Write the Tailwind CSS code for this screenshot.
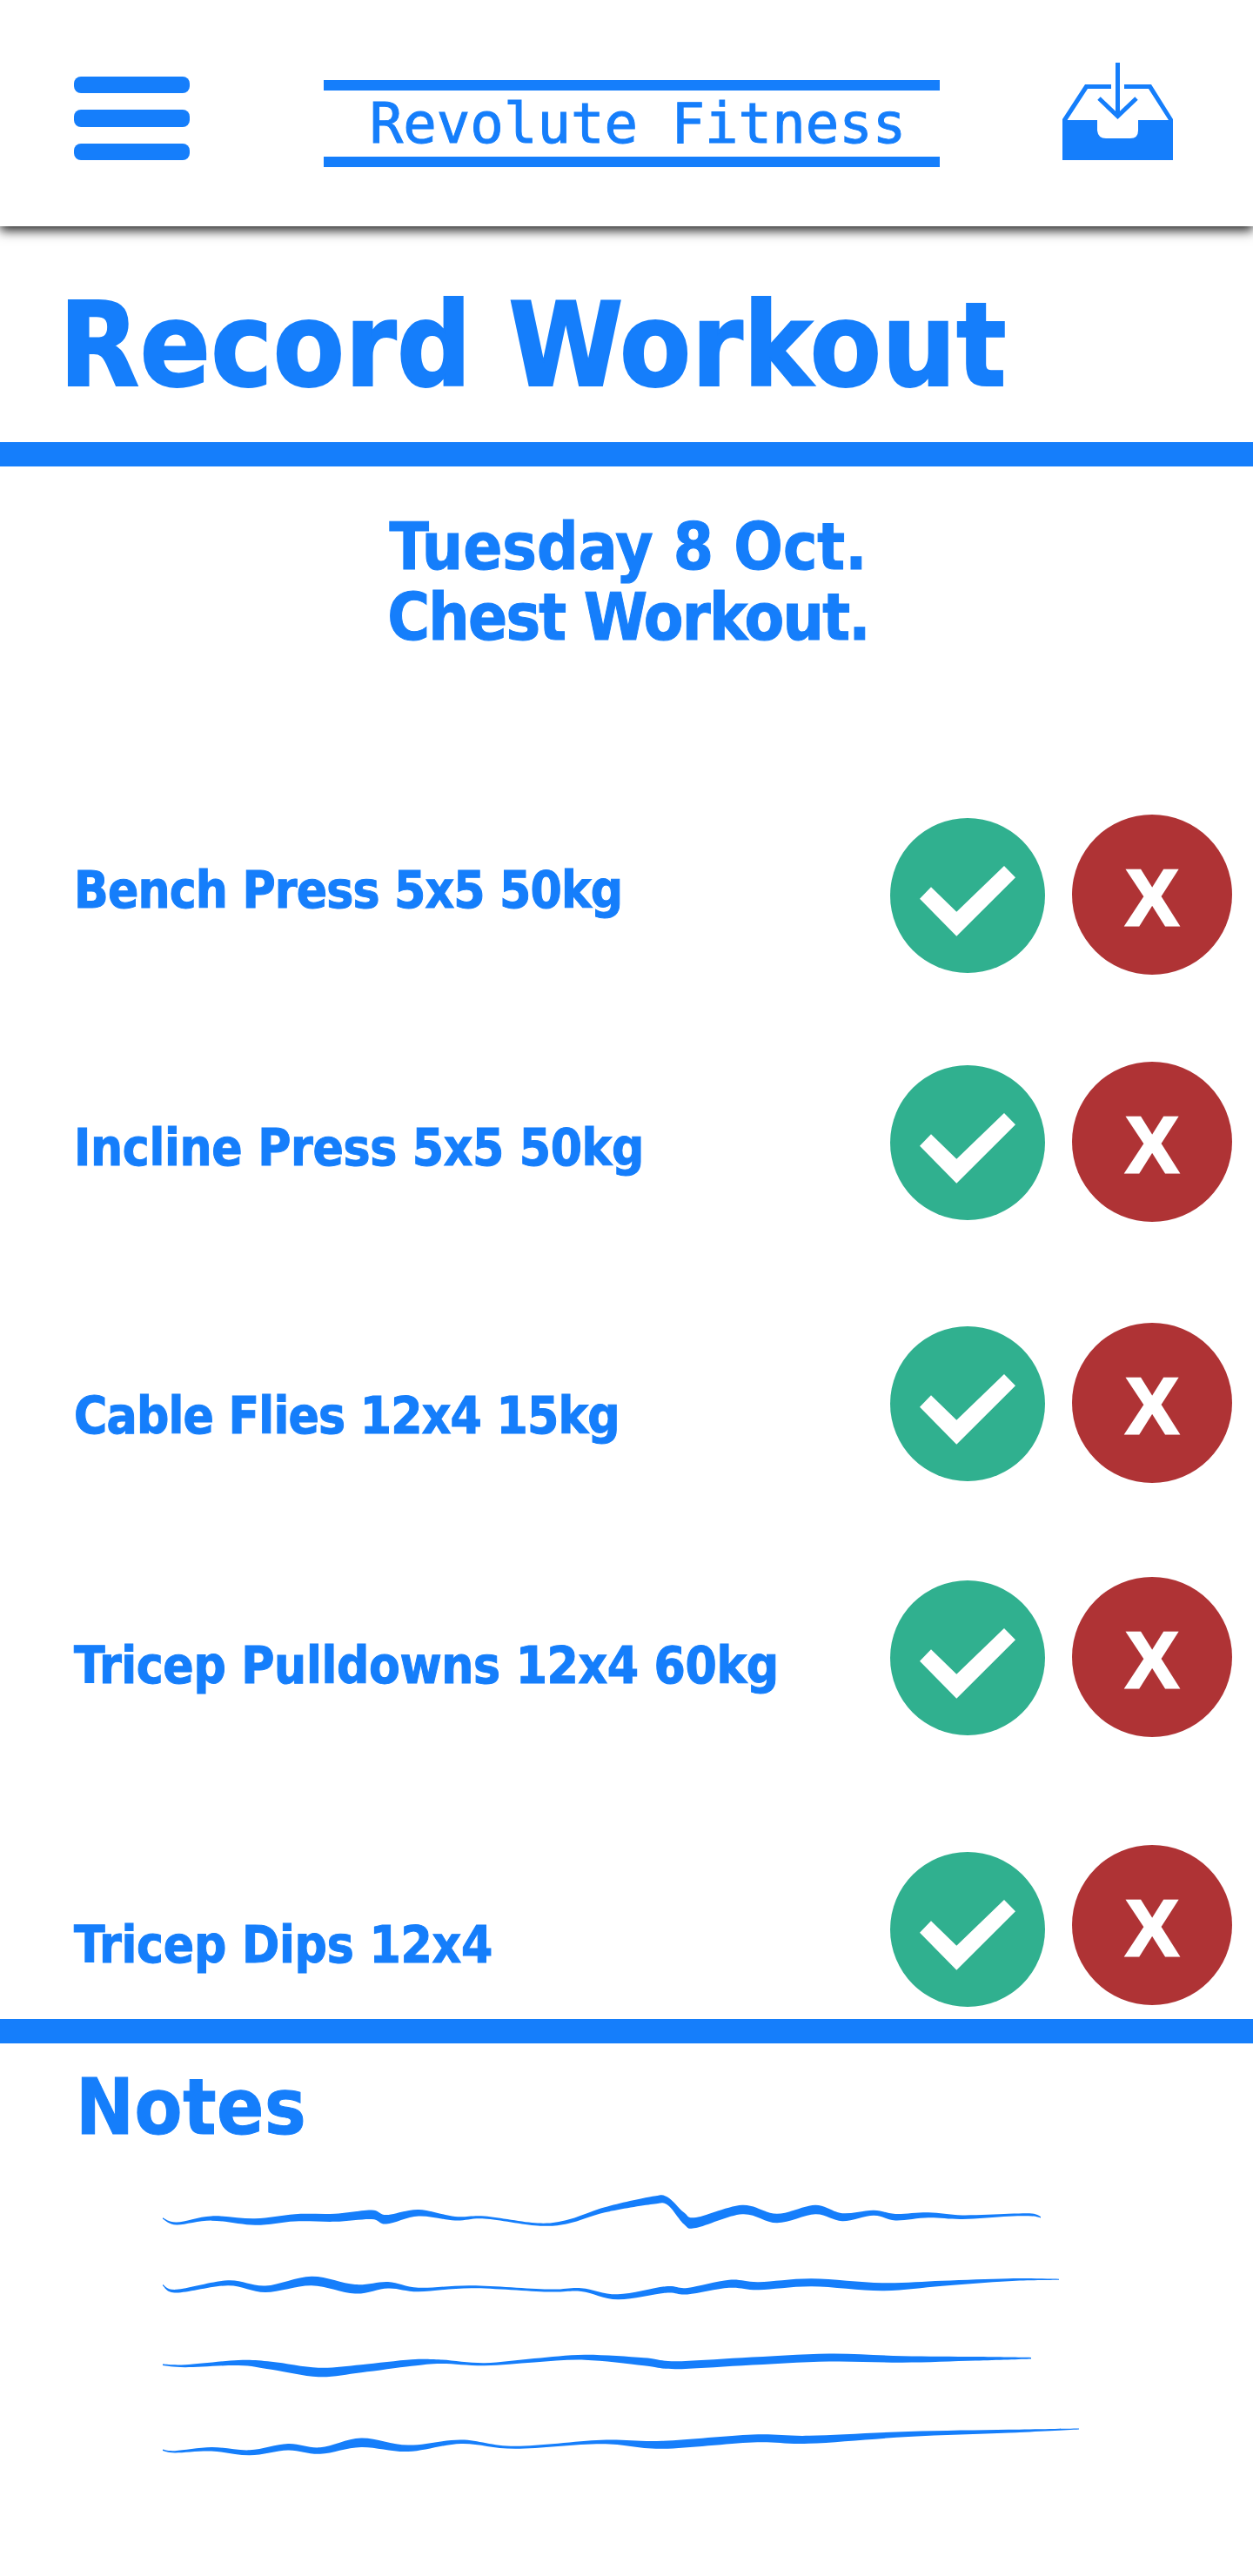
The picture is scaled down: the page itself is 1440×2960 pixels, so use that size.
<!DOCTYPE html>
<html lang="en">
<head>
  <meta charset="UTF-8">
  <title>Revolute Fitness - Record Workout</title>
  <script src="https://cdn.jsdelivr.net/npm/@tailwindcss/browser@4"></script>
</head>
<body class="bg-white text-[#157efb] font-['DejaVu_Sans_Condensed','DejaVu_Sans',sans-serif] font-bold">
  <div class="w-[1440px] h-[2960px] overflow-hidden flex flex-col">
    <!-- header -->
    <header class="h-[260px] shrink-0 flex items-start shadow-[0_5px_12px_rgba(0,0,0,0.85)] relative">
      <div class="ml-[85px] mt-[88px] w-[133px] flex flex-col gap-[19px]">
        <div class="h-[19px] rounded-[8px] bg-[#157efb]"></div>
        <div class="h-[20px] rounded-[8px] bg-[#157efb]"></div>
        <div class="h-[19px] rounded-[8px] bg-[#157efb]"></div>
      </div>
      <div class="ml-[154px] mt-[92px] w-[708px] h-[100px] border-y-[12px] border-[#157efb] flex items-center justify-center pl-[14px] font-['DejaVu_Sans_Mono',monospace] font-normal text-[64px] leading-none [-webkit-text-stroke:1px_#157efb]">Revolute Fitness</div>
      <svg class="ml-[141px] mt-[72px]" width="127" height="112" viewBox="0 0 127 112">
        <path fill="#157efb" d="M0 65 L26 25 H56 V30 H29 L5.500 66 H40 V78 Q41 87 50 87 H78 Q87 87 87 78 V66 H122 L99 30 H71 V25 H102 L127 65 V112 H0 Z"/>
        <path fill="none" stroke="#157efb" stroke-width="5" d="M63.500 0 V61 M42 41 L63.500 61.500 L85 41"/>
      </svg>
    </header>

    <h1 class="shrink-0 pl-[68px] pt-[71px] pb-[44px] text-[133px] leading-none tracking-[0.5px] [-webkit-text-stroke:2px_#157efb]">Record Workout</h1>
    <div class="h-[28px] shrink-0 bg-[#157efb]"></div>

    <div class="mt-[52px] shrink-0 text-center text-[74px] leading-[80.5px] pl-[4px] [-webkit-text-stroke:1px_#157efb]">
      <p>Tuesday 8 Oct.</p>
      <p class="tracking-[-1.75px]">Chest Workout.</p>
    </div>

    <!-- exercises -->
    <div class="mt-[187px] shrink-0 flex flex-col pl-[85px] pr-[24px]">
      <div class="h-[284px] flex items-start">
        <p class="mt-[58px] text-[58px] leading-[58px] tracking-[-0.85px] [-webkit-text-stroke:1px_#157efb]">Bench Press 5x5 50kg</p>
        <div class="ml-auto mt-[4px] w-[178px] h-[178px] rounded-full bg-[#30b08f]">
          <svg width="178" height="178" viewBox="0 0 178 178"><path fill="#fff" d="M34 92.700 L47 79.300 L76.300 107.700 L131 55 L144 68.300 L76.300 135.700 Z"/></svg>
        </div>
        <div class="ml-[31px] w-[184px] h-[184px] rounded-full bg-[#af3335] flex items-center justify-center pt-[6px] text-white font-['Liberation_Sans',sans-serif] text-[91px] leading-none [-webkit-text-stroke:3px_#fff]">X</div>
      </div>
      <div class="h-[300px] flex items-start">
        <p class="mt-[70px] text-[58px] leading-[58px] tracking-[-0.35px] [-webkit-text-stroke:1px_#157efb]">Incline Press 5x5 50kg</p>
        <div class="ml-auto mt-[4px] w-[178px] h-[178px] rounded-full bg-[#30b08f]">
          <svg width="178" height="178" viewBox="0 0 178 178"><path fill="#fff" d="M34 92.700 L47 79.300 L76.300 107.700 L131 55 L144 68.300 L76.300 135.700 Z"/></svg>
        </div>
        <div class="ml-[31px] w-[184px] h-[184px] rounded-full bg-[#af3335] flex items-center justify-center pt-[6px] text-white font-['Liberation_Sans',sans-serif] text-[91px] leading-none [-webkit-text-stroke:3px_#fff]">X</div>
      </div>
      <div class="h-[292px] flex items-start">
        <p class="mt-[78px] text-[58px] leading-[58px] tracking-[-0.8px] [-webkit-text-stroke:1px_#157efb]">Cable Flies 12x4 15kg</p>
        <div class="ml-auto mt-[4px] w-[178px] h-[178px] rounded-full bg-[#30b08f]">
          <svg width="178" height="178" viewBox="0 0 178 178"><path fill="#fff" d="M34 92.700 L47 79.300 L76.300 107.700 L131 55 L144 68.300 L76.300 135.700 Z"/></svg>
        </div>
        <div class="ml-[31px] w-[184px] h-[184px] rounded-full bg-[#af3335] flex items-center justify-center pt-[6px] text-white font-['Liberation_Sans',sans-serif] text-[91px] leading-none [-webkit-text-stroke:3px_#fff]">X</div>
      </div>
      <div class="h-[308px] flex items-start">
        <p class="mt-[73px] text-[58px] leading-[58px] tracking-[-0.35px] [-webkit-text-stroke:1px_#157efb]">Tricep Pulldowns 12x4 60kg</p>
        <div class="ml-auto mt-[4px] w-[178px] h-[178px] rounded-full bg-[#30b08f]">
          <svg width="178" height="178" viewBox="0 0 178 178"><path fill="#fff" d="M34 92.700 L47 79.300 L76.300 107.700 L131 55 L144 68.300 L76.300 135.700 Z"/></svg>
        </div>
        <div class="ml-[31px] w-[184px] h-[184px] rounded-full bg-[#af3335] flex items-center justify-center pt-[6px] text-white font-['Liberation_Sans',sans-serif] text-[91px] leading-none [-webkit-text-stroke:3px_#fff]">X</div>
      </div>
      <div class="h-[200px] flex items-start">
        <p class="mt-[86px] text-[58px] leading-[58px] tracking-[-0.25px] [-webkit-text-stroke:1px_#157efb]">Tricep Dips 12x4</p>
        <div class="ml-auto mt-[8px] w-[178px] h-[178px] rounded-full bg-[#30b08f]">
          <svg width="178" height="178" viewBox="0 0 178 178"><path fill="#fff" d="M34 92.700 L47 79.300 L76.300 107.700 L131 55 L144 68.300 L76.300 135.700 Z"/></svg>
        </div>
        <div class="ml-[31px] w-[184px] h-[184px] rounded-full bg-[#af3335] flex items-center justify-center pt-[6px] text-white font-['Liberation_Sans',sans-serif] text-[91px] leading-none [-webkit-text-stroke:3px_#fff]">X</div>
      </div>
    </div>

    <div class="h-[28px] shrink-0 bg-[#157efb]"></div>

    <!-- notes -->
    <h2 class="mt-[29px] pl-[87px] shrink-0 text-[89px] leading-none tracking-[0.6px] [-webkit-text-stroke:1px_#157efb]">Notes</h2>
    <svg class="shrink-0" id="scribbles" width="1440" height="495" viewBox="0 2465 1440 495" fill="#157efb"></svg>
  </div>

  <script>
    // hand written lines: [x, y, thickness] along each stroke
    const strokes = [
      [[187,2548,1],[203,2554,2],[243,2548,3.500],[293,2552,5],[339,2547.300,5.500],[385,2547.300,6],[427,2543.700,7],[444,2549.300,7],[481,2541.700,5],[523,2548.300,3],[557,2547,2],[618,2555,2],[653,2551.700,3],[695,2538.300,4],[750,2527.300,6],[767,2528,6],[786,2548,9],[800,2553,8],[853,2538,7],[893,2548,7],[937,2538,7],[968,2546.700,6],[1004,2541.700,4],[1029,2546.700,5],[1067,2544.300,4],[1106,2546.700,3],[1159,2544.300,2],[1186,2544,2],[1196,2546.700,1]],
      [[187,2624.700,1],[203,2631.700,2.500],[262,2622.300,4],[305,2629.300,5],[358,2620,7],[408,2629.300,7],[446,2624.700,5],[481,2630,3],[542,2626.700,2],[630,2631,2],[668,2630,2.500],[710,2638.300,4],[765,2630,5],[790,2631.700,5],[838,2623.300,6],[872,2625.700,6],[933,2621.700,6],[1014,2626.700,6],[1083,2622.700,4],[1159,2618.700,2],[1217,2618.300,0.700]],
      [[187,2716.300,1],[213,2717.700,2],[274,2714,4],[312,2717.300,6],[366,2725,7],[415,2720.700,6],[473,2714,5],[507,2712.700,3],[557,2715.700,2],[614,2711.300,3],[672,2707.700,4],[740,2712.700,6],[776,2716.700,6],[853,2712.700,6],[953,2708,6],[1037,2710,5],[1121,2709.300,3],[1185,2708.700,1]],
      [[187,2814.300,1],[201,2816.300,1.500],[243,2813.300,3],[287,2817.300,4],[331,2810.700,5],[368,2815,5],[415,2805.700,7],[469,2812.300,5],[530,2804.700,3],[592,2811.300,2],[691,2805,3],[761,2808.300,6],[865,2801,6],[930,2802.300,6],[1044,2796,4],[1159,2792.700,2.500],[1240,2790,0.700]]
    ];

    // catmull-rom through the points, so the wiggles keep their height
    function curve(pts) {
      let d = '';
      for (let i = 0; i < pts.length - 1; i++) {
        const p0 = pts[i - 1] || pts[i];
        const p1 = pts[i];
        const p2 = pts[i + 1];
        const p3 = pts[i + 2] || p2;
        d += ` C${p1[0] + (p2[0] - p0[0]) / 6} ${p1[1] + (p2[1] - p0[1]) / 6} ${p2[0] - (p3[0] - p1[0]) / 6} ${p2[1] - (p3[1] - p1[1]) / 6} ${p2[0]} ${p2[1]}`;
      }
      return d;
    }

    const svg = document.getElementById('scribbles');
    strokes.forEach(s => {
      const top = s.map(p => [p[0], p[1] - p[2] * 0.75]);
      const bottom = s.map(p => [p[0], p[1] + p[2] * 0.75]).reverse();
      const path = document.createElementNS('http://www.w3.org/2000/svg', 'path');
      path.setAttribute('d', `M${top[0][0]} ${top[0][1]}` + curve(top) + ` L${bottom[0][0]} ${bottom[0][1]}` + curve(bottom) + ' Z');
      svg.appendChild(path);
    });
  </script>
</body>
</html>
